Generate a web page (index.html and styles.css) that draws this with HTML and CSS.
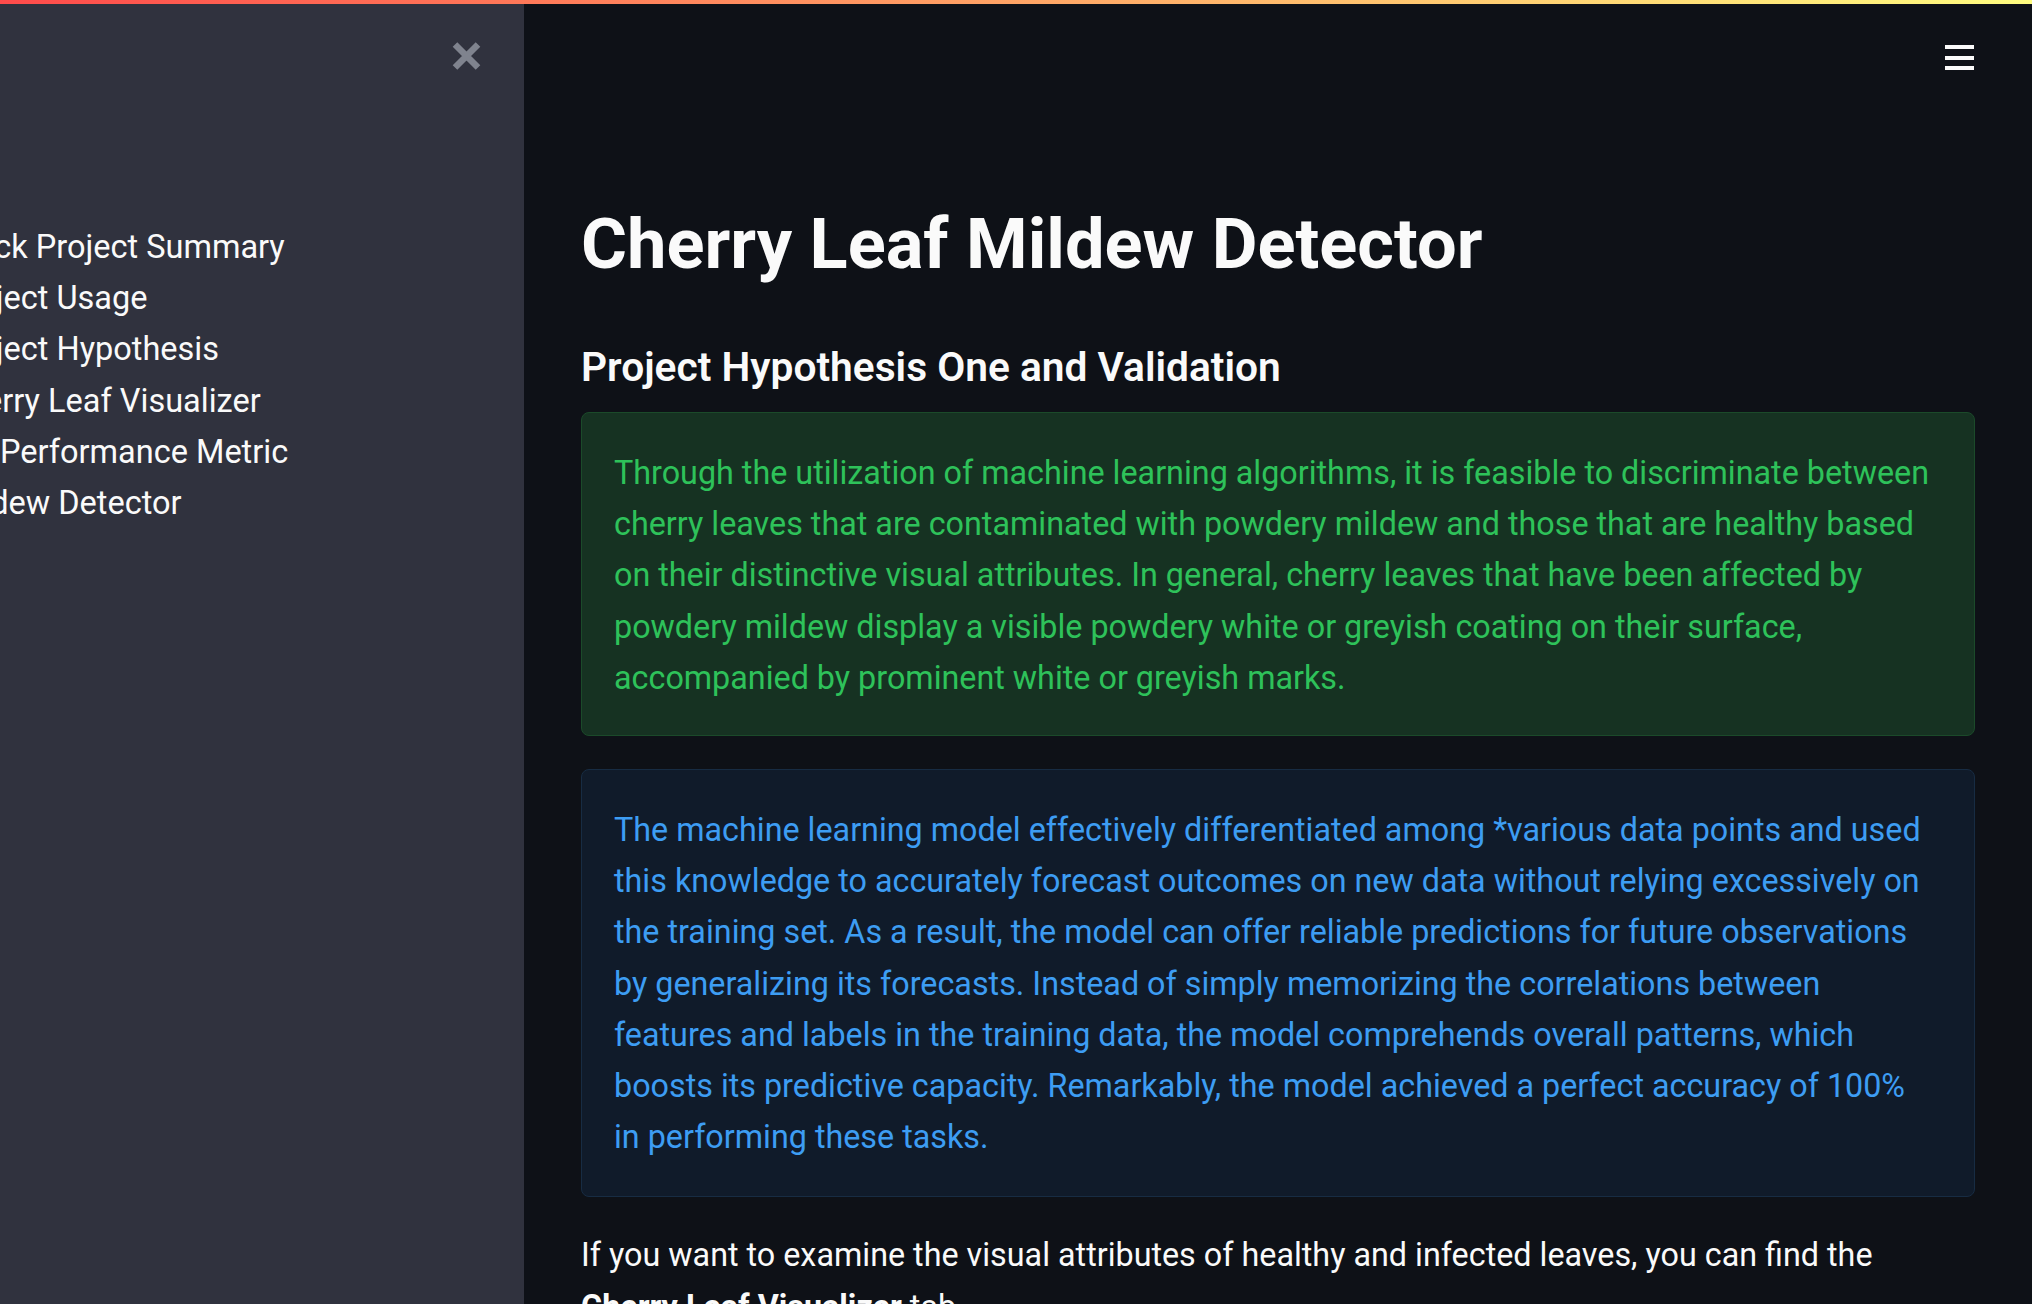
FILE: index.html
```html
<!DOCTYPE html>
<html lang="en">
<head>
<meta charset="utf-8">
<title>Cherry Leaf Mildew Detector</title>
<link rel="stylesheet" href="styles.css">
</head>
<body>
<div class="decoration"></div>
<div class="app">
  <aside class="sidebar">
    <div class="sidebar-top">
      <button class="close-btn" aria-label="Close sidebar">
        <svg width="29" height="28" viewBox="0 0 29 28"><path d="M3 2.5 L26 25.5 M26 2.5 L3 25.5" stroke="#7f838e" stroke-width="6.5" fill="none"/></svg>
      </button>
    </div>
    <ul class="nav">
      <li>Quick Project Summary</li>
      <li>Project Usage</li>
      <li>Project Hypothesis</li>
      <li>Cherry Leaf Visualizer</li>
      <li>ML Performance Metric</li>
      <li>Mildew Detector</li>
    </ul>
  </aside>
  <main class="main">
    <header class="header">
      <button class="menu-btn" aria-label="Menu">
        <svg width="29" height="25" viewBox="0 0 29 25"><rect x="0" y="0" width="29" height="4" fill="#fafafa"/><rect x="0" y="11" width="29" height="4" fill="#fafafa"/><rect x="0" y="21" width="29" height="4" fill="#fafafa"/></svg>
      </button>
    </header>
    <div class="content">
      <h1 class="title">Cherry Leaf Mildew Detector</h1>
      <h3 class="subtitle">Project Hypothesis One and Validation</h3>
      <div class="alert alert-success">
        <p>Through the utilization of machine learning algorithms, it is feasible to discriminate between<br>cherry leaves that are contaminated with powdery mildew and those that are healthy based<br>on their distinctive visual attributes. In general, cherry leaves that have been affected by<br>powdery mildew display a visible powdery white or greyish coating on their surface,<br>accompanied by prominent white or greyish marks.</p>
      </div>
      <div class="alert alert-info">
        <p>The machine learning model effectively differentiated among *various data points and used<br>this knowledge to accurately forecast outcomes on new data without relying excessively on<br>the training set. As a result, the model can offer reliable predictions for future observations<br>by generalizing its forecasts. Instead of simply memorizing the correlations between<br>features and labels in the training data, the model comprehends overall patterns, which<br>boosts its predictive capacity. Remarkably, the model achieved a perfect accuracy of 100%<br>in performing these tasks.</p>
      </div>
      <p class="text">If you want to examine the visual attributes of healthy and infected leaves, you can find the<br><strong>Cherry Leaf Visualizer</strong> tab.</p>
    </div>
  </main>
</div>
</body>
</html>
```
FILE: styles.css
```css
* { box-sizing: border-box; }
html, body {
  margin: 0;
  padding: 0;
  width: 2032px;
  height: 1304px;
  overflow: hidden;
  background: #0e1117;
  font-family: Roboto, "Liberation Sans", sans-serif;
  color: #fafafa;
}
.decoration {
  height: 4px;
  background: linear-gradient(90deg, #ff4b4b, #fffd80);
}
.app {
  display: flex;
  height: 1300px;
}
.sidebar {
  width: 524px;
  flex: 0 0 524px;
  background: #30323e;
  overflow: hidden;
}
.sidebar-top {
  display: flex;
  justify-content: flex-end;
  padding: 38px 43px 0 0;
}
button {
  background: none;
  border: 0;
  padding: 0;
  margin: 0;
  display: block;
  cursor: pointer;
}
.close-btn svg, .menu-btn svg { display: block; }
.nav {
  list-style: none;
  margin: 152px 0 0 -54px;
  padding: 0;
  font-size: 32.5px;
  line-height: 51.2px;
  white-space: nowrap;
}
.main {
  flex: 1;
  overflow: hidden;
}
.header {
  display: flex;
  justify-content: flex-end;
  padding: 41px 58px 0 0;
}
.content {
  width: 1394px;
  margin: 0 auto;
  padding-top: 134px;
}
.title {
  margin: 0;
  font-size: 70.4px;
  line-height: 80px;
  font-weight: 700;
}
.subtitle {
  margin: 59px 0 0;
  font-size: 40.7px;
  line-height: 48px;
  font-weight: 600;
}
.alert {
  border-radius: 8px;
  border: 1px solid;
}
.alert p {
  margin: 0;
  font-size: 32.3px;
  line-height: 51.2px;
  white-space: nowrap;
}
.alert-success {
  margin-top: 21px;
  padding: 35px 32px 31px;
  background: #163222;
  border-color: #1b4a2a;
  color: #2ec25a;
}
.alert-info {
  margin-top: 33px;
  padding: 35px 32px 33px;
  background: #101b2a;
  border-color: #172c43;
  color: #3d9df3;
}
.text {
  margin: 33px 0 0;
  font-size: 32.3px;
  line-height: 51.2px;
  white-space: nowrap;
}
.text strong { font-weight: 700; }
```
